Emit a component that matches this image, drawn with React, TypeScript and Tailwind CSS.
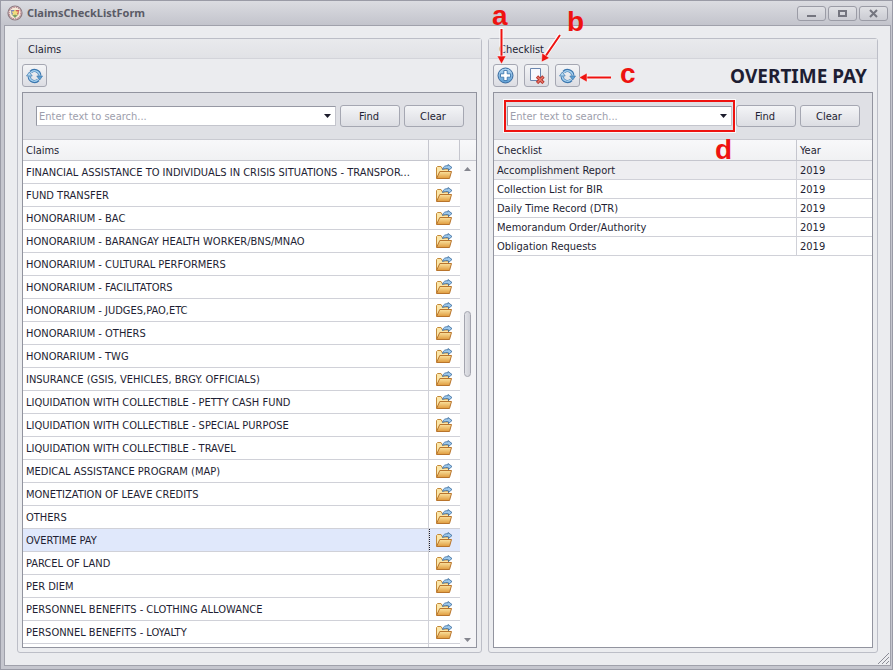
import React from "react";

const claims = [
  "FINANCIAL ASSISTANCE TO INDIVIDUALS IN CRISIS SITUATIONS - TRANSPOR...",
  "FUND TRANSFER",
  "HONORARIUM - BAC",
  "HONORARIUM - BARANGAY HEALTH WORKER/BNS/MNAO",
  "HONORARIUM - CULTURAL PERFORMERS",
  "HONORARIUM - FACILITATORS",
  "HONORARIUM - JUDGES,PAO,ETC",
  "HONORARIUM - OTHERS",
  "HONORARIUM - TWG",
  "INSURANCE (GSIS, VEHICLES, BRGY. OFFICIALS)",
  "LIQUIDATION WITH COLLECTIBLE - PETTY CASH FUND",
  "LIQUIDATION WITH COLLECTIBLE - SPECIAL PURPOSE",
  "LIQUIDATION WITH COLLECTIBLE - TRAVEL",
  "MEDICAL ASSISTANCE PROGRAM (MAP)",
  "MONETIZATION OF LEAVE CREDITS",
  "OTHERS",
  "OVERTIME PAY",
  "PARCEL OF LAND",
  "PER DIEM",
  "PERSONNEL BENEFITS - CLOTHING ALLOWANCE",
  "PERSONNEL BENEFITS - LOYALTY",
];

const checklist = [
  "Accomplishment Report",
  "Collection List for BIR",
  "Daily Time Record (DTR)",
  "Memorandum Order/Authority",
  "Obligation Requests",
];

const selectedClaim = "OVERTIME PAY";

function FolderIcon() {
  return (
    <svg width="18" height="16" viewBox="0 0 18 16" className="mx-auto block" aria-hidden="true">
      <defs>
        <linearGradient id="folderFront" x1="0" y1="0" x2="0" y2="1">
          <stop offset="0" stopColor="#fbe3a0" />
          <stop offset="1" stopColor="#df9a3c" />
        </linearGradient>
      </defs>
      <path d="M1.500 14V3.500l1-1h3.500l1.500 2.500h6V9" fill="#fbe6a8" stroke="#c48a3a" />
      <path d="M1.500 14.500 4.800 7.500H16.500L14.500 14.500Z" fill="url(#folderFront)" stroke="#b8742c" strokeLinejoin="round" />
      <path d="M7.500 5.500C8 2.500 10.500 1.200 13 1.800V.5L17 3.500l-3.500 3V4.800C11.500 4.200 9.500 4.500 7.500 5.500Z" fill="#9cc8ec" stroke="#39699c" strokeWidth=".8" />
    </svg>
  );
}

function RefreshIcon() {
  return (
    <svg width="17" height="16" viewBox="0 0 17 16" fill="none" aria-hidden="true">
      <path d="M4.600 4.200A5.300 5.300 0 0 1 13.800 7.500M12.400 11.800A5.300 5.300 0 0 1 3.200 8.500" stroke="#3a76ae" strokeWidth="3.200" />
      <path d="M4.900 4.400A5.100 5.100 0 0 1 13.700 7.500M12.100 11.600A5.100 5.100 0 0 1 3.300 8.500" stroke="#a5d0ef" strokeWidth="1.500" />
      <path d="M10.800 8h5.700l-2.800 4Z" fill="#5c9fd2" stroke="#3a76ae" strokeWidth=".7" />
      <path d="M.5 8h5.700L3.400 4Z" fill="#b4d9f2" stroke="#3a76ae" strokeWidth=".7" />
    </svg>
  );
}

function AddIcon() {
  return (
    <svg width="17" height="17" viewBox="0 0 17 17" aria-hidden="true">
      <defs>
        <linearGradient id="addFill" x1="0" y1="0" x2="0" y2="1">
          <stop offset="0" stopColor="#b4d6f0" />
          <stop offset="1" stopColor="#5b9dd3" />
        </linearGradient>
      </defs>
      <circle cx="8.500" cy="8.500" r="7.500" fill="url(#addFill)" stroke="#386a9f" />
      <path d="M6.800 3.500h3.400v3.300h3.300v3.400h-3.300v3.300H6.800v-3.300H3.500V6.800h3.300Z" fill="#fff" stroke="#3d76ad" strokeWidth=".9" />
    </svg>
  );
}

function DeleteIcon() {
  return (
    <svg width="16" height="16" viewBox="0 0 16 16" aria-hidden="true">
      <path d="M1.500.5h10v12h-10Z" fill="#f7f8fd" stroke="#6b86ae" />
      <path d="m8 8.500 6.500 6.500M14.500 8.500 8 15" stroke="#b5342c" strokeWidth="3.200" />
      <path d="m8.500 9 5.500 5.500M14 9l-5.500 5.500" stroke="#ec7a6c" strokeWidth="1.300" />
    </svg>
  );
}

function SealIcon() {
  return (
    <svg width="16" height="16" viewBox="0 0 16 16" aria-hidden="true">
      <circle cx="8" cy="8" r="7" fill="#f4e9e8" stroke="#8d7a80" strokeWidth="1.200" />
      <circle cx="8" cy="8" r="5.800" fill="#f3ead8" stroke="#b06a74" strokeWidth="1" strokeDasharray="1.500 1" />
      <path d="M3.800 5h4.200v4.500H4.600Z" fill="#7f86b4" />
      <path d="M8 5h4.200l-.8 4.500H8Z" fill="#cd5c62" />
      <path d="M4.600 9.500h6.800L8 13Z" fill="#7c9d64" />
      <path d="m8 4.500 1.500 2h2L10 8.500l.5 2L8 9.500l-2.500 1 .5-2-1.500-2h2Z" fill="#f1dc7c" />
    </svg>
  );
}

function ToolButton({ label, children }: { label: string; children: React.ReactNode }) {
  return (
    <button
      type="button"
      aria-label={label}
      className="flex h-[23px] w-[25px] items-center justify-center rounded-[3px] border border-[#a5a7b2] bg-linear-to-b from-[#f4f5f7] to-[#dcdde3]"
    >
      {children}
    </button>
  );
}

function PushButton({ children }: { children: React.ReactNode }) {
  return (
    <button
      type="button"
      className="h-[22px] w-[60px] shrink-0 rounded-[3px] border border-[#a5a7b2] bg-linear-to-b from-[#f4f5f7] to-[#dcdde3] pt-0.5 pr-0.5 text-center"
    >
      {children}
    </button>
  );
}

function WindowButton({ label, children }: { label: string; children: React.ReactNode }) {
  return (
    <button
      type="button"
      aria-label={label}
      className="flex h-[15px] w-[29px] items-center justify-center rounded-[3px] border border-[#9b9ca6] bg-linear-to-b from-[#e0e1e5] to-[#cbccd3]"
    >
      <svg width="11" height="9" viewBox="0 0 11 9" fill="none" stroke="#74757f" strokeWidth="2" aria-hidden="true">
        {children}
      </svg>
    </button>
  );
}

function SearchPanel({ label, highlighted = false }: { label: string; highlighted?: boolean }) {
  return (
    <div className="flex h-[47px] shrink-0 items-center gap-1 border-b border-[#c9cad1] bg-[#dfe0e5] pr-3 pl-[13px]">
      <div className="relative flex h-[20px] min-w-0 flex-1 items-center border border-[#c4c5cd] border-t-[#9698a3] border-l-[#9698a3] bg-white">
        <input
          type="text"
          aria-label={label}
          placeholder="Enter text to search..."
          className="h-full min-w-0 flex-1 bg-transparent px-0.5 outline-none placeholder:text-[#9d9eac]"
        />
        <button type="button" aria-label="Search history" className="flex h-full w-[15px] items-center justify-center">
          <svg width="7" height="4" viewBox="0 0 7 4" aria-hidden="true">
            <path d="M0 0h7L3.500 4Z" fill="#1c1c2c" />
          </svg>
        </button>
        {highlighted && (
          <div className="pointer-events-none absolute -inset-x-[4px] -inset-y-[7px] border-2 border-[#ee1310] outline-1 outline-white/80" />
        )}
      </div>
      <PushButton>Find</PushButton>
      <PushButton>Clear</PushButton>
    </div>
  );
}

function Group({ title, children }: { title: string; children: React.ReactNode }) {
  return (
    <section className="relative flex min-h-0 min-w-0 flex-col rounded-[3px] border border-[#bcbec7] bg-[#ebecef]">
      <h2 className="h-[20px] shrink-0 border-b border-[#d3d4da] bg-linear-to-b from-[#e9eaed] to-[#e1e2e6] px-2.5 pt-px leading-5">
        {title}
      </h2>
      {children}
    </section>
  );
}

const headCell = "h-[21px] border-b border-[#c5c6ce] bg-linear-to-b from-[#f8f8fa] to-[#f0f1f3] pt-0.5 text-left font-normal";

function ScrollBar() {
  return (
    <div className="flex w-[16px] shrink-0 flex-col items-center bg-[#f4f4f6] pt-[6px] pr-px pb-[5px]">
      <svg width="7" height="4" viewBox="0 0 7 4" className="shrink-0" aria-hidden="true">
        <path d="M0 4h7L3.500 0Z" fill="#85868f" />
      </svg>
      <div className="grow-[140]" />
      <div className="h-[66px] w-[7px] shrink-0 rounded-full border border-[#a3a4ae] bg-linear-to-r from-[#e2e3e8] to-[#cfd0d7]" />
      <div className="grow-[260]" />
      <svg width="7" height="4" viewBox="0 0 7 4" className="shrink-0" aria-hidden="true">
        <path d="M0 0h7L3.500 4Z" fill="#85868f" />
      </svg>
    </div>
  );
}

function ClaimsGrid() {
  return (
    <div className="mx-1 mb-1 flex min-h-0 flex-1 flex-col border border-[#92949f] bg-white">
      <SearchPanel label="Search claims" />
      <div className="flex min-h-0 flex-1 overflow-hidden">
        <div className="min-w-0 flex-1">
          <table className="w-full table-fixed border-separate border-spacing-0">
            <colgroup>
              <col />
              <col className="w-[31px]" />
            </colgroup>
            <thead>
              <tr>
                <th className={`${headCell} border-r px-[3px]`}>Claims</th>
                <th className={`${headCell} border-r`} aria-label="Open" />
              </tr>
            </thead>
            <tbody>
              {claims.map((name) => {
                const selected = name === selectedClaim;
                return (
                  <tr key={name} className={selected ? "bg-[#e0e8fb]" : "bg-white"}>
                    <td className="h-[23px] truncate border-r border-b border-[#d0d1d8] pt-0.5 pl-[3px]">{name}</td>
                    <td
                      className={
                        selected
                          ? "h-[23px] border-b border-l border-b-[#d0d1d8] border-l-[#1c1c2c] pr-0.5 [border-left-style:dotted]"
                          : "h-[23px] border-b border-[#d0d1d8] pr-px"
                      }
                    >
                      <button type="button" aria-label={`Open ${name}`} className="block w-full">
                        <FolderIcon />
                      </button>
                    </td>
                  </tr>
                );
              })}
              <tr>
                <td className="h-[23px] border-r border-[#d0d1d8]" />
                <td />
              </tr>
            </tbody>
          </table>
        </div>
        <div className="flex flex-col">
          <div className={`${headCell} shrink-0`} />
          <div className="flex min-h-0 flex-1">
            <ScrollBar />
          </div>
        </div>
      </div>
    </div>
  );
}

function ChecklistGrid() {
  return (
    <div className="mx-1 mb-1 flex min-h-0 flex-1 flex-col border border-[#92949f] bg-white">
      <SearchPanel label="Search checklist" highlighted />
      <table className="w-full table-fixed border-separate border-spacing-0">
        <colgroup>
          <col />
          <col className="w-[75px]" />
        </colgroup>
        <thead>
          <tr>
            <th className={`${headCell} border-r px-[3px]`}>Checklist</th>
            <th className={`${headCell} px-[3px]`}>Year</th>
          </tr>
        </thead>
        <tbody>
          {checklist.map((name, i) => (
            <tr key={name} className={i === 0 ? "bg-[#eeeef1]" : "bg-white"}>
              <td className="h-[19px] truncate border-r border-b border-[#d0d1d8] px-[3px] pt-0.5">{name}</td>
              <td className="h-[19px] border-b border-[#d0d1d8] px-[3px] pt-0.5">2019</td>
            </tr>
          ))}
        </tbody>
      </table>
    </div>
  );
}

const letter = "absolute font-['Liberation_Sans',Arial,sans-serif] text-[28px] leading-6 font-bold text-[#ee1310]";

function Callouts() {
  return (
    <div className="pointer-events-none absolute -top-[39px] -left-px h-[180px] w-[260px]">
      <svg width="260" height="180" viewBox="0 0 260 180" className="absolute inset-0" aria-hidden="true">
        <g stroke="#fff" strokeOpacity=".85" strokeWidth="4">
          <path d="M13.500 28V57M72 35 57 56M123 77.500H98" />
        </g>
        <g stroke="#ee1310" strokeWidth="2">
          <path d="M13.500 29V58M72 35 57 57M123 77.500H98" />
        </g>
        <g fill="#ee1310" stroke="#fff" strokeWidth=".5">
          <path d="M9 56h9l-4.500 8ZM53.500 62l.5-9 7.500 5ZM91 77.500l8-4.500v9Z" />
        </g>
      </svg>
      <span className={`${letter} top-1 left-1`}>a</span>
      <span className={`${letter} top-2.5 left-[79px]`}>b</span>
      <span className={`${letter} top-[62px] left-[132px]`}>c</span>
      <span className={`${letter} top-[138px] left-[227px]`}>d</span>
    </div>
  );
}

export default function App() {
  return (
    <div className="flex h-screen flex-col border border-[#9a9ba6] bg-[#c5c6ce] font-['DejaVu_Sans_Condensed','DejaVu_Sans',sans-serif] text-[11px] leading-4 text-[#1e1e33]">
      <header className="flex h-6 shrink-0 items-center gap-1 bg-linear-to-b from-[#dbdce1] to-[#c3c4cc] pr-1 pl-1.5">
        <SealIcon />
        <h1 className="flex-1 font-['Noto_Sans',sans-serif] font-bold text-[#5a5b66]">ClaimsCheckListForm</h1>
        <div className="flex gap-0.5">
          <WindowButton label="Minimize">
            <path d="M1 7h9" />
          </WindowButton>
          <WindowButton label="Maximize">
            <path d="M2 2h7v5H2Z" />
          </WindowButton>
          <WindowButton label="Close">
            <path d="m2 1 7 7M9 1 2 8" />
          </WindowButton>
        </div>
      </header>
      <main className="relative mr-px mb-[3px] ml-[3px] grid min-h-0 flex-1 grid-cols-[465fr_390fr] grid-rows-[minmax(0,1fr)] gap-1.5 border border-[#a0a1ab] bg-[#ebecef] p-3">
        <Group title="Claims">
          <div className="flex h-[33px] shrink-0 items-center px-1">
            <ToolButton label="Refresh claims">
              <RefreshIcon />
            </ToolButton>
          </div>
          <ClaimsGrid />
        </Group>
        <Group title="Checklist">
          <div className="flex h-[33px] shrink-0 items-center gap-1.5 pr-2.5 pl-1">
            <ToolButton label="Add">
              <AddIcon />
            </ToolButton>
            <ToolButton label="Delete">
              <DeleteIcon />
            </ToolButton>
            <ToolButton label="Refresh checklist">
              <RefreshIcon />
            </ToolButton>
            <strong className="ml-auto font-['Noto_Sans',sans-serif] text-[19px] leading-6 font-bold">OVERTIME PAY</strong>
          </div>
          <ChecklistGrid />
          <Callouts />
        </Group>
        <svg width="11" height="11" viewBox="0 0 11 11" className="absolute right-px bottom-px" stroke="#8b8c96" aria-hidden="true">
          <path d="M0 11 11 0M4 11l7-7M8 11l3-3" />
        </svg>
      </main>
    </div>
  );
}
